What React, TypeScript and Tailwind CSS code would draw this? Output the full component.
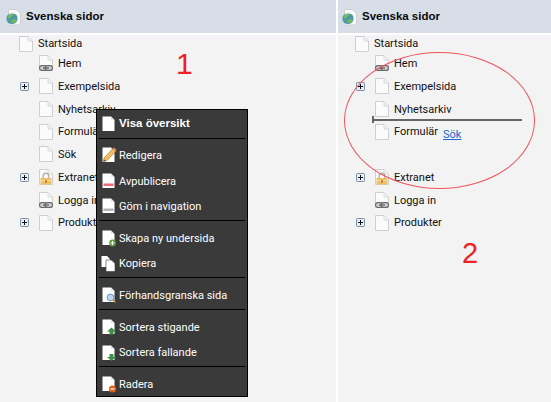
import React from "react";

const ui = "font-['Liberation_Sans',sans-serif]";
const label = "font-['Roboto',sans-serif] text-[11px] mt-[2px]";

function Page({ children }: { children?: React.ReactNode }) {
  return (
    <svg width="16" height="18" viewBox="0 0 16 18" className="shrink-0 block">
      <path d="M1.5 1.5H10L14.5 6V16.5H1.5Z" fill="#fbfbfb" stroke="#cfcfcf" strokeLinejoin="round" />
      <path d="M10 1.5V6H14.5" fill="#f0f0f0" stroke="#dadada" />
      {children}
    </svg>
  );
}

const Chain = () => (
  <g fill="#d4d4d4" stroke="#6a6a6a" strokeWidth="1.2">
    <rect x="1.6" y="11.6" width="7" height="4.8" rx="2.2" />
    <rect x="7.4" y="11.6" width="7" height="4.8" rx="2.2" />
    <path d="M5 14H11" stroke="#555555" fill="none" />
  </g>
);

const Lock = () => (
  <g>
    <path d="M5.2 10V8a2.8 2.8 0 0 1 5.6 0V10" fill="none" stroke="#b4b0a4" strokeWidth="1.4" />
    <rect x="2.5" y="10" width="11" height="6.5" rx="0.6" fill="#f0c069" />
    <path d="M2.5 12.5H13.5" stroke="#f9dfa6" />
    <rect x="7" y="12" width="2" height="3" fill="#c48f34" />
  </g>
);

const Plus = () => (
  <svg width="9" height="9" viewBox="0 0 9 9" className="block shrink-0">
    <rect x="0.5" y="0.5" width="8" height="8" rx="0.8" fill="#e6edf6" stroke="#7d8ea3" />
    <path d="M2 4.5H7M4.5 2V7" stroke="#111111" />
  </svg>
);

const Globe = () => (
  <svg width="16" height="18" viewBox="0 0 16 18" className="block shrink-0">
    <path d="M2.5 1.5H10.5L14.5 5.5V17H2.5Z" fill="#f8f8f8" stroke="#cfcfcf" />
    <circle cx="6" cy="10.5" r="5.6" fill="#4b9aa6" />
    <path d="M1.5 8.5c2-2 3-3 5-3 1 1 0 3-1 3s-1 3-3 2ZM5.5 12c2-1 4-1 5.5 0-1 2-3 3.5-4 3.5s-2-2.5-1.5-3.5Z" fill="#78b85a" />
    <path d="M3 6.5A4.5 4.5 0 0 1 8 5.5" stroke="#cfe6e8" fill="none" />
  </svg>
);

type Node = { label: string; plus?: boolean; extra?: React.ReactNode };

const rows: Node[] = [
  { label: "Hem", extra: <Chain /> },
  { label: "Exempelsida", plus: true },
  { label: "Nyhetsarkiv" },
  { label: "Formulär" },
  { label: "Sök" },
  { label: "Extranet", plus: true, extra: <Lock /> },
  { label: "Logga in", extra: <Chain /> },
  { label: "Produkter", plus: true },
];

function Row({ node, hidden }: { node: Node; hidden?: boolean }) {
  return (
    <div className="flex h-[22.75px] items-center">
      <div className="w-[18px] shrink-0">{node.plus ? <Plus /> : null}</div>
      {hidden ? null : <Page>{node.extra}</Page>}
      {hidden ? null : <span className={`ml-[4px] whitespace-nowrap text-[#111111] ${label}`}>{node.label}</span>}
    </div>
  );
}

function Panel({ right }: { right?: boolean }) {
  return (
    <div className={`flex flex-col bg-[#f3f3f3] ${right ? "flex-1 border-l-2 border-white" : "w-[336px] shrink-0"}`}>
      <div className={`flex h-[35px] items-center gap-[4px] border-b-2 border-white bg-[#d7dee8] ${right ? "pl-[4px]" : "pl-[6px]"}`}>
        <Globe />
        <span className="text-[11.5px] font-bold text-[#0a0a0a]">Svenska sidor</span>
      </div>
      <div className={`flex h-[17px] items-center ${right ? "pl-[16px]" : "pl-[18px]"}`}>
        <Page />
        <span className={`ml-[4px] text-[#111111] ${label}`}>Startsida</span>
      </div>
      <div className={right ? "pl-[18px]" : "pl-[20px]"}>
        {rows.map((r) => (
          <Row key={r.label} node={r} hidden={right && r.label === "Sök"} />
        ))}
      </div>
    </div>
  );
}

function MI({ text, bold, icon }: { text: string; bold?: boolean; icon: React.ReactNode }) {
  return (
    <div className="flex h-[25.5px] items-center pl-[4px] pt-[2px]">
      <div className="w-[18px] shrink-0">{icon}</div>
      {bold ? (
        <span className="whitespace-nowrap text-[11.5px] font-bold text-white">{text}</span>
      ) : (
        <span className={`whitespace-nowrap text-white ${label}`}>{text}</span>
      )}
    </div>
  );
}

const Sep = () => (
  <div className="mx-[2px] h-[6.2px] pt-[2px]">
    <div className="h-[1px] bg-black" />
  </div>
);

function MenuPage({ children }: { children?: React.ReactNode }) {
  return (
    <svg width="16" height="18" viewBox="0 0 16 18" className="block">
      <path d="M1.5 1.5H10L13.5 5V16H1.5Z" fill="#ffffff" />
      <path d="M10 1.5V5H13.5" fill="#e4e4e4" />
      {children}
    </svg>
  );
}

function Menu() {
  return (
    <div className="absolute left-[96px] top-[109px] w-[152px] border border-black bg-[#3a3a3a]">
      <MI bold text="Visa översikt" icon={<MenuPage />} />
      <Sep />
      <MI
        text="Redigera"
        icon={
          <MenuPage>
            <path d="M3 12L11.5 3L14.5 5.5L6 14.5L2.5 15.5Z" fill="#f0c060" stroke="#b07a2a" strokeWidth="0.7" />
            <path d="M11.5 3L14.5 5.5L15.5 4L13 1.5Z" fill="#e88a5a" />
            <path d="M2.5 15.5L3 13.5L4.5 15Z" fill="#333333" />
          </MenuPage>
        }
      />
      <MI
        text="Avpublicera"
        icon={
          <MenuPage>
            <rect x="2.5" y="11.5" width="10" height="2.5" fill="#ee6a78" />
          </MenuPage>
        }
      />
      <MI
        text="Göm i navigation"
        icon={
          <MenuPage>
            <rect x="2.5" y="11.5" width="10" height="2.5" fill="#b4b4b4" />
          </MenuPage>
        }
      />
      <Sep />
      <MI
        text="Skapa ny undersida"
        icon={
          <MenuPage>
            <circle cx="11.5" cy="14" r="3.4" fill="#5f9e3c" />
            <path d="M9.5 14H13.5M11.5 12V16" stroke="#ffffff" />
          </MenuPage>
        }
      />
      <MI
        text="Kopiera"
        icon={
          <svg width="16" height="18" viewBox="0 0 16 18" className="block">
            <path d="M0.5 1H6L9 4V12H0.5Z" fill="#ffffff" />
            <path d="M5 5H10.5L14 8.5V16.5H5Z" fill="#ffffff" stroke="#3a3a3a" strokeWidth="0.6" />
          </svg>
        }
      />
      <Sep />
      <MI
        text="Förhandsgranska sida"
        icon={
          <MenuPage>
            <circle cx="9.5" cy="11.5" r="3.4" fill="#bcd4ee" stroke="#6d93c0" />
            <path d="M12 14L14.5 16.5" stroke="#c98a3a" strokeWidth="1.4" />
          </MenuPage>
        }
      />
      <Sep />
      <MI
        text="Sortera stigande"
        icon={
          <MenuPage>
            <path d="M10.5 9.5L15 13.5H12.5V16.5H8.5V13.5H6Z" fill="#3f8f46" />
          </MenuPage>
        }
      />
      <MI
        text="Sortera fallande"
        icon={
          <MenuPage>
            <path d="M10.5 17L15 13H12.5V10H8.5V13H6Z" fill="#3f8f46" />
          </MenuPage>
        }
      />
      <Sep />
      <MI
        text="Radera"
        icon={
          <MenuPage>
            <circle cx="11.5" cy="14" r="3.6" fill="#e0601c" />
            <path d="M9.5 14H13.5" stroke="#ffffff" strokeWidth="1.2" />
          </MenuPage>
        }
      />
    </div>
  );
}

export default function App() {
  return (
    <div className={`relative flex h-[402px] w-[551px] overflow-hidden bg-[#f3f3f3] ${ui}`}>
      <Panel />
      <Panel right />
      <Menu />
      <span className="absolute left-[176px] top-[47px] text-[30px] leading-[34px] text-[#ee2222]">1</span>
      <span className="absolute left-[462px] top-[236px] text-[29px] leading-[34px] text-[#ee2222]">2</span>
      <div className="absolute left-[344px] top-[52px] h-[137px] w-[191px] rounded-[50%] border border-[#ee5560]" />
      <div className="absolute left-[372px] top-[119px] h-[2px] w-[150px] bg-[#666666]" />
      <div className="absolute left-[372px] top-[116px] h-[7px] w-[2px] bg-[#666666]" />
      <span className={`absolute left-[443px] top-[125px] text-[#1a66cc] underline ${label}`}>Sök</span>
    </div>
  );
}
